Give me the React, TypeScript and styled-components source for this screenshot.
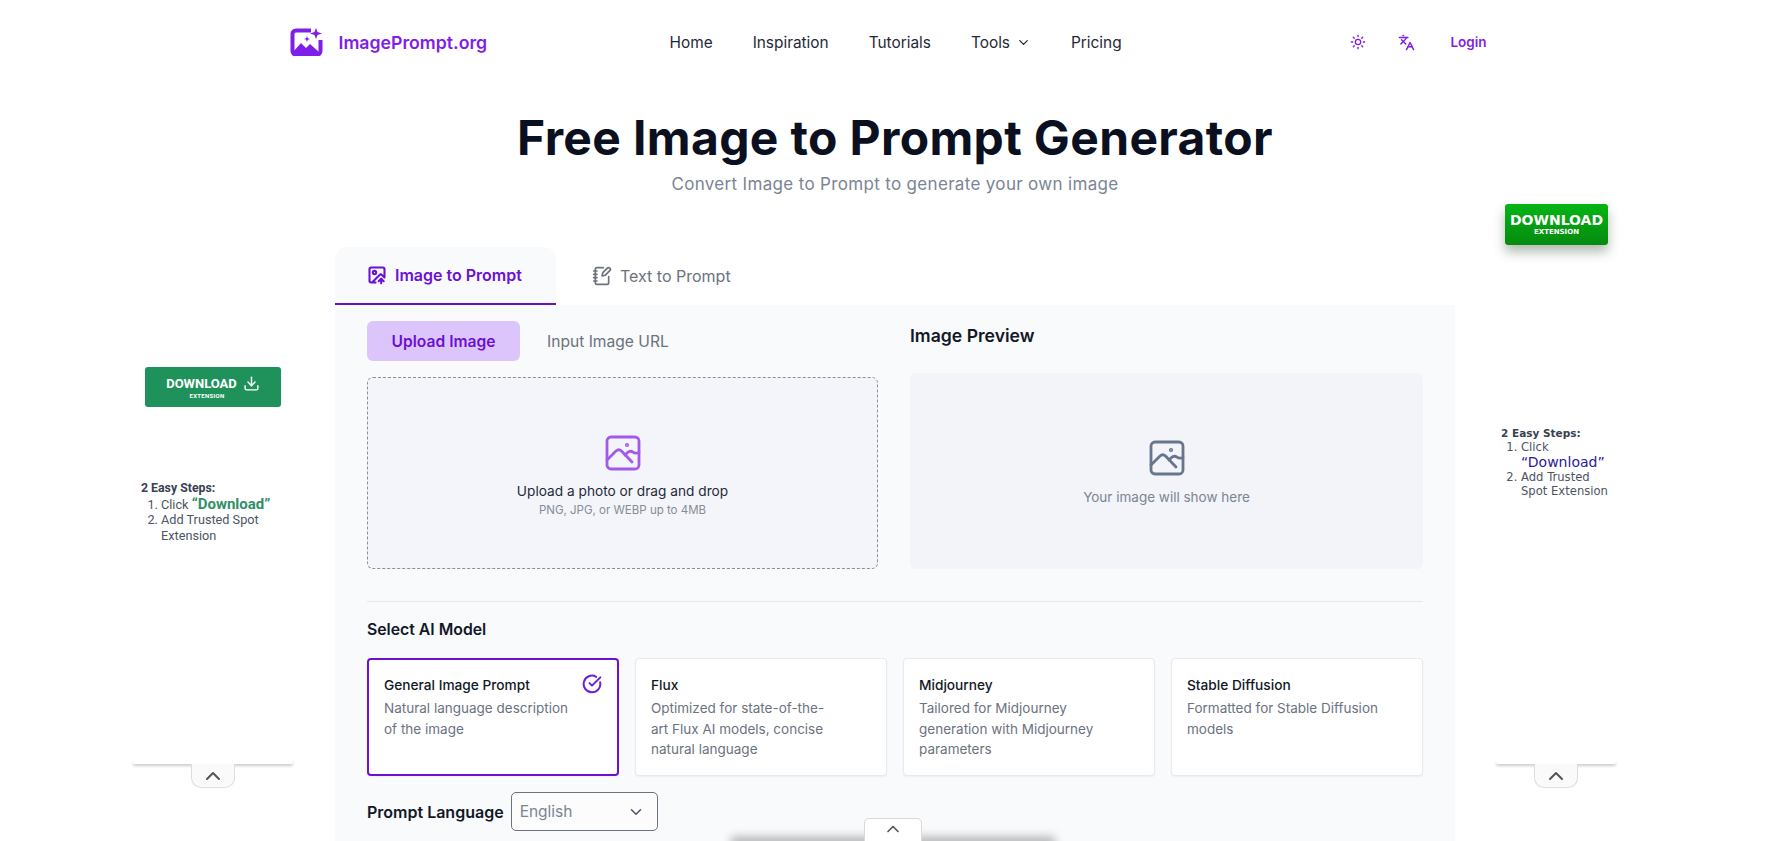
import React from 'react';
import styled, { createGlobalStyle } from 'styled-components';
import { Sun, Languages, ChevronDown, ChevronUp, NotebookPen, ImageUp, CircleCheckBig, Download } from 'lucide-react';

const Global = createGlobalStyle`
  html, body { margin: 0; height: 100%; overflow: hidden; background: #fff; }
  body { font-family: Inter, "Liberation Sans", sans-serif; color: #111827; }
  #root { height: 100%; }
  * { box-sizing: border-box; }
`;

const Page = styled.div`
  position: relative;
  height: 841px;
  overflow: hidden;
`;
const Header = styled.header`
  width: 1204px;
  height: 84px;
  margin: 0 auto;
  display: grid;
  grid-template-columns: 380px 1fr auto;
  align-items: center;
`;
const Brand = styled.a`
  display: flex;
  align-items: center;
  gap: 16px;
  font-size: 17.7px;
  font-weight: 600;
  color: #7e1ee8;
`;
const Nav = styled.nav`
  display: flex;
  align-items: center;
  gap: 40px;
  font-size: 15.4px;
  color: #1f2937;
`;
const NavItem = styled.span`
  display: inline-flex;
  align-items: center;
  gap: 6px;
`;
const HeaderActions = styled.div`
  display: flex;
  align-items: center;
  gap: 32px;
  padding-right: 7px;
  color: #7e1ee8;
`;
const Login = styled.span`
  font-size: 13.5px;
  font-weight: 600;
  margin-left: 3px;
`;
const Main = styled.main`
  width: 1120px;
  margin: 0 auto;
  position: relative;
  left: 3.5px;
`;
const Hero = styled.div`
  text-align: center;
  height: 163px;
`;
const Title = styled.h1`
  margin: 0;
  padding-top: 25px;
  font-size: 48px;
  line-height: 58px;
  letter-spacing: 0.35px;
  font-weight: 700;
  color: #0b1020;
`;
const Subtitle = styled.p`
  margin: 4px 0 0;
  font-size: 17px;
  line-height: 26px;
  letter-spacing: 0.33px;
  color: #7b8494;
`;
const Tabs = styled.div`
  display: flex;
  height: 58px;
`;
const Tab = styled.div<{ $active?: boolean }>`
  display: flex;
  align-items: center;
  gap: 8px;
  width: ${p => (p.$active ? '221px' : 'auto')};
  padding-left: ${p => (p.$active ? '32px' : '36px')};
  font-size: 16px;
  font-weight: ${p => (p.$active ? 600 : 400)};
  color: ${p => (p.$active ? '#6d0fd4' : '#6b7280')};
  background: ${p => (p.$active ? '#f9fafb' : 'transparent')};
  border-radius: 12px 12px 0 0;
  border-bottom: ${p => (p.$active ? '2.5px solid #6414bd' : 'none')};
`;
const Panel = styled.section`
  background: #f9fafb;
  padding: 16px 32px 40px;
  height: 700px;
`;
const Columns = styled.div`
  display: grid;
  grid-template-columns: 511px 513px;
  gap: 32px;
  height: 248px;
`;
const Column = styled.div`
  display: flex;
  flex-direction: column;
`;
const SubTabs = styled.div`
  display: flex;
  align-items: center;
  gap: 27px;
  height: 40px;
  margin-bottom: 16px;
`;
const SubTab = styled.div<{ $active?: boolean }>`
  display: flex;
  align-items: center;
  justify-content: center;
  height: 40px;
  width: ${p => (p.$active ? '153px' : 'auto')};
  border-radius: 6px;
  font-size: 15.6px;
  font-weight: ${p => (p.$active ? 600 : 400)};
  color: ${p => (p.$active ? '#6d0fd4' : '#6b7280')};
  background: ${p => (p.$active ? '#dcc5fb' : 'transparent')};
`;
const PreviewTitle = styled.h3`
  margin: 0 0 24px;
  height: 28px;
  display: flex;
  align-items: center;
  font-size: 17.6px;
  font-weight: 600;
  color: #111827;
`;
const DropZone = styled.div`
  height: 192px;
  background: #f3f5fa;
  border: 1px dashed #8b8f99;
  border-radius: 6px;
  display: flex;
  flex-direction: column;
  align-items: center;
  padding-top: 57px;
`;
const DropText = styled.div`
  margin-top: 10px;
  font-size: 13.7px;
  line-height: 20px;
  color: #1f2937;
`;
const DropHint = styled.div`
  margin-top: 1px;
  font-size: 11.5px;
  line-height: 16px;
  color: #858b97;
`;
const Preview = styled.div`
  height: 196px;
  background: #f2f4f9;
  border-radius: 6px;
  display: flex;
  flex-direction: column;
  align-items: center;
  padding-top: 67px;
`;
const PreviewText = styled.div`
  margin-top: 11px;
  font-size: 13.5px;
  line-height: 20px;
  color: #7b8494;
`;
const Divider = styled.hr`
  border: 0;
  border-top: 1px solid #e5e7eb;
  margin: 32px 0 0;
`;
const SectionTitle = styled.h3`
  margin: 17px 0 17px;
  font-size: 15.8px;
  line-height: 22px;
  font-weight: 600;
  color: #111827;
`;
const Cards = styled.div`
  display: grid;
  grid-template-columns: repeat(4, 1fr);
  gap: 16px;
`;
const Card = styled.div<{ $active?: boolean }>`
  position: relative;
  height: 118px;
  padding: ${p => (p.$active ? '15px' : '16px')} 15px;
  background: #fff;
  border-radius: 4px;
  border: ${p => (p.$active ? '2px solid #6d0fd4' : '1px solid #e8eaee')};
  box-shadow: 0 1px 2px rgba(0, 0, 0, 0.05);
`;
const CardTitle = styled.div`
  margin-bottom: 3px;
  font-size: 13.7px;
  line-height: 20px;
  font-weight: 500;
  color: #111827;
`;
const CardLine = styled.div`
  font-size: 13.5px;
  line-height: 20.5px;
  color: #6b7280;
`;
const CheckMark = styled.span`
  position: absolute;
  top: 14px;
  right: 15px;
  color: #6d1fd8;
  display: flex;
`;
const LanguageRow = styled.div`
  display: flex;
  align-items: center;
  gap: 7px;
  margin-top: 16px;
`;
const LanguageLabel = styled.label`
  font-size: 16px;
  font-weight: 600;
  color: #111827;
`;
const LanguageSelect = styled.div`
  width: 147px;
  height: 39px;
  display: flex;
  align-items: center;
  justify-content: space-between;
  padding: 0 12px 0 8px;
  background: #fcfcfd;
  border: 1px solid #6b7280;
  border-radius: 5px;
  font-size: 15.5px;
  color: #7b8494;
`;
const SideAd = styled.aside<{ $left: number; $top: number }>`
  position: absolute;
  left: ${p => p.$left}px;
  top: ${p => p.$top}px;
`;
const FlatButton = styled.div`
  width: 136px;
  height: 40px;
  background: #1f925c;
  border-radius: 3px;
  color: #fff;
  display: flex;
  flex-direction: column;
  align-items: center;
  justify-content: center;
  font-family: Roboto, sans-serif;
`;
const FlatLabel = styled.div`
  display: flex;
  align-items: center;
  gap: 6px;
  font-size: 13px;
  line-height: 14px;
  font-weight: 700;
`;
const FlatSub = styled.div`
  font-size: 6px;
  line-height: 7px;
  font-weight: 700;
  margin-right: 12px;
  letter-spacing: 0.3px;
`;
const GlossButton = styled.div`
  width: 103px;
  height: 41px;
  background: linear-gradient(#05b514, #068a10);
  border-radius: 3px;
  color: #fff;
  display: flex;
  flex-direction: column;
  align-items: center;
  justify-content: center;
  font-family: "DejaVu Sans", sans-serif;
  box-shadow: 0 7px 12px rgba(30, 60, 30, 0.35);
`;
const GlossLabel = styled.div`
  font-size: 14px;
  line-height: 15px;
  font-weight: 700;
`;
const GlossSub = styled.div`
  font-size: 7px;
  line-height: 9px;
  font-weight: 700;
`;
const Steps = styled.div<{ $wide?: boolean }>`
  font-family: ${p => (p.$wide ? '"DejaVu Sans", sans-serif' : 'Roboto, sans-serif')};
  font-size: ${p => (p.$wide ? '11.6px' : '12.7px')};
  line-height: ${p => (p.$wide ? '13.5px' : '15.5px')};
  color: #4b5563;
`;
const StepsTitle = styled.div<{ $wide?: boolean }>`
  font-weight: 700;
  font-size: ${p => (p.$wide ? '10.5px' : '12.3px')};
  color: #374151;
`;
const StepsList = styled.ol`
  margin: 0;
  padding-left: 20px;
`;
const Quoted = styled.strong<{ $blue?: boolean }>`
  font-size: ${p => (p.$blue ? '14px' : '15px')};
  font-weight: ${p => (p.$blue ? 500 : 700)};
  color: ${p => (p.$blue ? '#2a1a9a' : '#2f8f68')};
  display: ${p => (p.$blue ? 'block' : 'inline')};
  line-height: ${p => (p.$blue ? '17px' : '15px')};
`;
const Collapser = styled.div<{ $left: number; $top: number; $width: number }>`
  position: absolute;
  left: ${p => p.$left}px;
  top: ${p => p.$top}px;
  width: ${p => p.$width}px;
  height: 4px;
  background: #fff;
  box-shadow: 0 2px 3px rgba(0, 0, 0, 0.2);
  border-radius: 2px;
  display: flex;
  justify-content: center;
`;
const CollapserTab = styled.div`
  margin-top: 4px;
  width: 44px;
  height: 24px;
  display: flex;
  justify-content: center;
  background: #fafafa;
  border: 1px solid #ddd;
  border-top: 0;
  border-radius: 0 0 10px 10px;
  color: #555;
`;
const BottomBar = styled.div`
  position: absolute;
  left: 735px;
  top: 842px;
  width: 316px;
  height: 2px;
  background: #fff;
  box-shadow: 0 -1px 10px 4px rgba(0, 0, 0, 0.3);
`;
const BottomTab = styled.div`
  position: absolute;
  left: 864px;
  top: 818px;
  width: 58px;
  height: 30px;
  display: flex;
  justify-content: center;
  background: #fff;
  border: 1px solid #d9d9d9;
  border-radius: 5px 5px 0 0;
  color: #555;
`;

const Logo = () => (
  <svg width="33" height="28" viewBox="0 0 33 28" fill="none">
    <path d="M21 2.500H6a3.500 3.500 0 0 0-3.500 3.500v17A3.500 3.500 0 0 0 6 26.500h21a3.500 3.500 0 0 0 3.500-3.500V12" stroke="#7e1ee8" strokeWidth="4" />
    <path d="M3 24l8-9 5 5 4-4 9 8v3H3z" fill="#7e1ee8" />
    <path d="M26 0l1.500 4L32 5.500 27.500 7 26 11l-1.500-4L20 5.500 24.500 4z" fill="#7e1ee8" />
    <path d="M17 8l.8 2.200L20 11l-2.200.8L17 14l-.8-2.200L14 11l2.200-.8z" fill="#7e1ee8" />
  </svg>
);

const PhotoIcon = ({ color, size }: { color: string; size: number }) => (
  <svg width={size} height={size} viewBox="0 0 36 36" fill="none" stroke={color} strokeWidth="2.800" strokeLinecap="round" strokeLinejoin="round">
    <rect x="2" y="2" width="32" height="32" rx="4" />
    <circle cx="22" cy="10" r="0.700" fill={color} />
    <path d="M2 25l9-9c2-1.800 3.500-1.800 5.500 0L27 27" />
    <path d="M20 20l2.500-2.500c2-1.800 3.500-1.800 5.500-.3 2 1.500 3 1.500 6 .3" />
  </svg>
);

const models = [
  { title: 'General Image Prompt', lines: ['Natural language description', 'of the image'], active: true },
  { title: 'Flux', lines: ['Optimized for state-of-the-', 'art Flux AI models, concise', 'natural language'] },
  { title: 'Midjourney', lines: ['Tailored for Midjourney', 'generation with Midjourney', 'parameters'] },
  { title: 'Stable Diffusion', lines: ['Formatted for Stable Diffusion', 'models'] },
];

export default function App() {
  return (
    <Page>
      <Global />
      <Header>
        <Brand><Logo />ImagePrompt.org</Brand>
        <Nav>
          <NavItem>Home</NavItem>
          <NavItem>Inspiration</NavItem>
          <NavItem>Tutorials</NavItem>
          <NavItem>Tools <ChevronDown size={15} /></NavItem>
          <NavItem>Pricing</NavItem>
        </Nav>
        <HeaderActions>
          <Sun size={16} />
          <Languages size={17} />
          <Login>Login</Login>
        </HeaderActions>
      </Header>
      <Main>
        <Hero>
          <Title>Free Image to Prompt Generator</Title>
          <Subtitle>Convert Image to Prompt to generate your own image</Subtitle>
        </Hero>
        <Tabs>
          <Tab $active><ImageUp size={20} strokeWidth={2.5} />Image to Prompt</Tab>
          <Tab><NotebookPen size={20} />Text to Prompt</Tab>
        </Tabs>
        <Panel>
          <Columns>
            <Column>
              <SubTabs>
                <SubTab $active>Upload Image</SubTab>
                <SubTab>Input Image URL</SubTab>
              </SubTabs>
              <DropZone>
                <PhotoIcon color="#a259ec" size={36} />
                <DropText>Upload a photo or drag and drop</DropText>
                <DropHint>PNG, JPG, or WEBP up to 4MB</DropHint>
              </DropZone>
            </Column>
            <Column>
              <PreviewTitle>Image Preview</PreviewTitle>
              <Preview>
                <PhotoIcon color="#68758c" size={36} />
                <PreviewText>Your image will show here</PreviewText>
              </Preview>
            </Column>
          </Columns>
          <Divider />
          <SectionTitle>Select AI Model</SectionTitle>
          <Cards>
            {models.map(m => (
              <Card key={m.title} $active={m.active}>
                <CardTitle>{m.title}</CardTitle>
                {m.lines.map(line => <CardLine key={line}>{line}</CardLine>)}
                {m.active && <CheckMark><CircleCheckBig size={20} strokeWidth={2.4} /></CheckMark>}
              </Card>
            ))}
          </Cards>
          <LanguageRow>
            <LanguageLabel>Prompt Language</LanguageLabel>
            <LanguageSelect>English <ChevronDown size={18} color="#4b5563" /></LanguageSelect>
          </LanguageRow>
        </Panel>
      </Main>

      <SideAd $left={145} $top={367}>
        <FlatButton>
          <FlatLabel>DOWNLOAD <Download size={17} /></FlatLabel>
          <FlatSub>EXTENSION</FlatSub>
        </FlatButton>
      </SideAd>
      <SideAd $left={141} $top={481}>
        <Steps>
          <StepsTitle>2 Easy Steps:</StepsTitle>
          <StepsList>
            <li>Click <Quoted>“Download”</Quoted></li>
            <li>Add Trusted Spot<br />Extension</li>
          </StepsList>
        </Steps>
      </SideAd>
      <SideAd $left={1505} $top={204}>
        <GlossButton>
          <GlossLabel>DOWNLOAD</GlossLabel>
          <GlossSub>EXTENSION</GlossSub>
        </GlossButton>
      </SideAd>
      <SideAd $left={1501} $top={427}>
        <Steps $wide>
          <StepsTitle $wide>2 Easy Steps:</StepsTitle>
          <StepsList>
            <li>Click <Quoted $blue>“Download”</Quoted></li>
            <li>Add Trusted<br />Spot Extension</li>
          </StepsList>
        </Steps>
      </SideAd>
      <Collapser $left={133} $top={760} $width={160}>
        <CollapserTab><ChevronUp size={24} /></CollapserTab>
      </Collapser>
      <Collapser $left={1496} $top={760} $width={120}>
        <CollapserTab><ChevronUp size={24} /></CollapserTab>
      </Collapser>
      <BottomBar />
      <BottomTab><ChevronUp size={20} /></BottomTab>
    </Page>
  );
}
